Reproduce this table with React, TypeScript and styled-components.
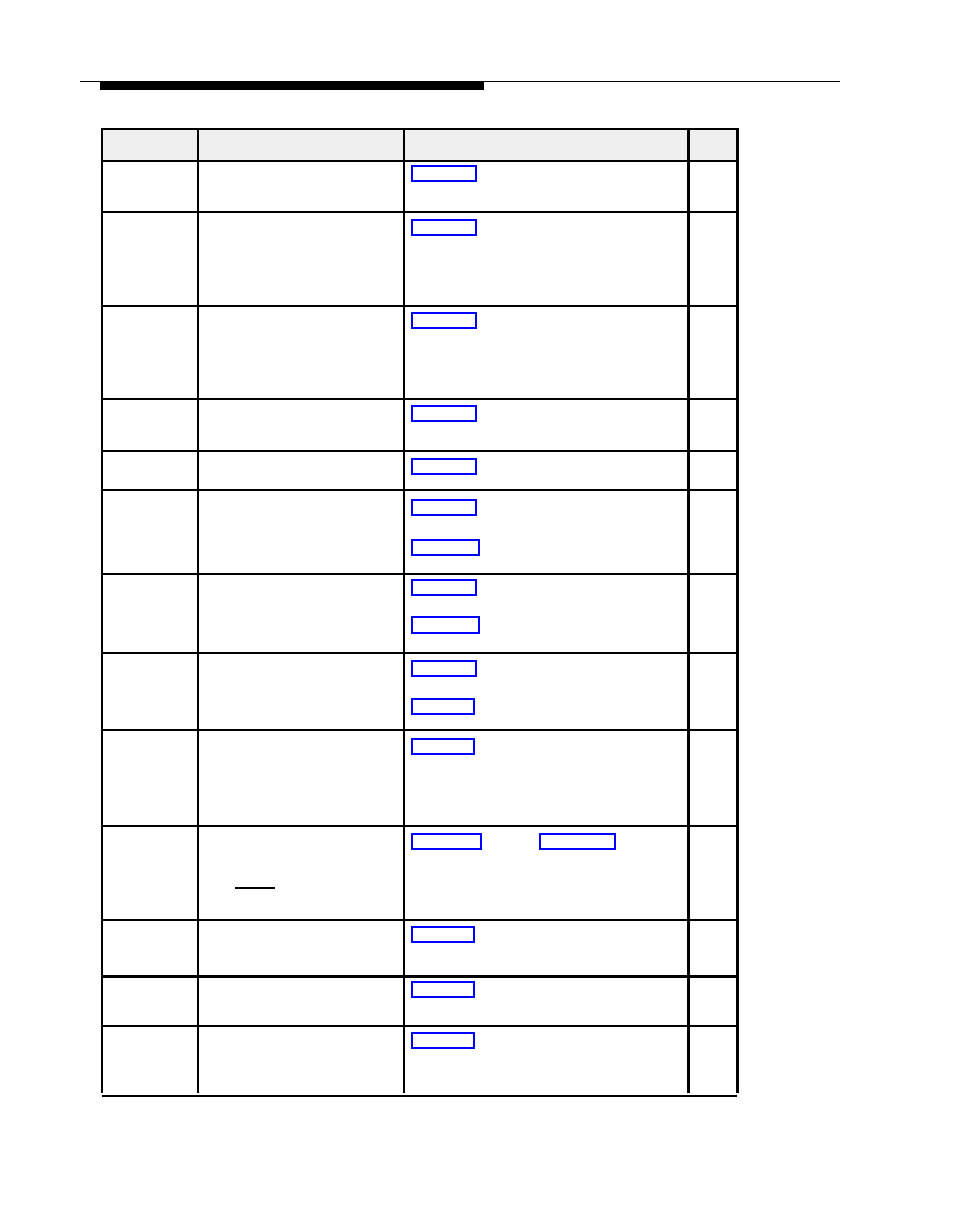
import React from 'react';
import styled, { createGlobalStyle } from 'styled-components';

const GlobalStyle = createGlobalStyle`
  html, body {
    margin: 0;
    padding: 0;
    background: #ffffff;
    font-family: "Liberation Sans", Arial, sans-serif;
  }
`;

interface LinkBox {
  width: number;
  height?: number;
  gap?: number;
}

interface RowData {
  height: number;
  offset: number;
  heavy?: boolean;
  inline?: boolean;
  boxes: LinkBox[];
  underline?: boolean;
}

const rows: RowData[] = [
  { height: 51, offset: 3, boxes: [{ width: 66 }] },
  { height: 94, offset: 6, boxes: [{ width: 66 }] },
  { height: 93, offset: 5, boxes: [{ width: 66 }] },
  { height: 52, offset: 5, boxes: [{ width: 66 }] },
  { height: 39, offset: 6, boxes: [{ width: 66 }] },
  { height: 84, offset: 8, boxes: [{ width: 66 }, { width: 69, gap: 23 }] },
  { height: 79, offset: 4, boxes: [{ width: 66 }, { width: 69, height: 18, gap: 20 }] },
  { height: 77, offset: 6, boxes: [{ width: 66 }, { width: 64, gap: 21 }] },
  { height: 96, offset: 7, boxes: [{ width: 64 }] },
  {
    height: 94,
    offset: 6,
    inline: true,
    underline: true,
    boxes: [{ width: 71 }, { width: 77, gap: 57 }],
  },
  { height: 56, offset: 5, boxes: [{ width: 64 }] },
  { height: 50, offset: 3, heavy: true, boxes: [{ width: 64 }] },
  { height: 68, offset: 5, boxes: [{ width: 64 }] },
];

const Page = styled.div`
  width: 954px;
  min-height: 1228px;
  padding-top: 81px;
  box-sizing: border-box;
`;

const HeadRule = styled.div`
  margin-left: 80px;
  width: 760px;
  height: 1px;
  background: #000;
`;

const HeadBar = styled.div`
  margin-left: 100px;
  width: 384px;
  height: 8px;
  background: #000;
`;

const Table = styled.div`
  margin-top: 38px;
  margin-left: 101px;
  width: 638px;
  border-left: 2px solid #000;
  box-sizing: border-box;
`;

const Row = styled.div<{ $height: number; $heavy?: boolean }>`
  display: grid;
  grid-template-columns: 96px 206px 285px 49px;
  height: ${(p) => p.$height}px;
  border-top: ${(p) => (p.$heavy ? 3 : 2)}px solid #000;
  box-sizing: border-box;
`;

const Cell = styled.div<{ $head?: boolean; $thick?: boolean }>`
  border-right: ${(p) => (p.$thick ? 3 : 2)}px solid #000;
  background: ${(p) => (p.$head ? '#efefef' : 'transparent')};
  box-sizing: border-box;
  min-width: 0;
`;

const LinkCell = styled(Cell)<{ $offset: number; $inline?: boolean }>`
  display: flex;
  flex-direction: ${(p) => (p.$inline ? 'row' : 'column')};
  align-items: flex-start;
  padding: ${(p) => p.$offset}px 0 0 6px;
`;

const Link = styled.a<{ $width: number; $height: number; $gap: number; $inline?: boolean }>`
  display: block;
  width: ${(p) => p.$width}px;
  height: ${(p) => p.$height}px;
  border: 2px solid #0000ff;
  box-sizing: border-box;
  ${(p) => (p.$inline ? `margin-left: ${p.$gap}px;` : `margin-top: ${p.$gap}px;`)}
`;

const TermCell = styled(Cell)`
  padding: 60px 0 0 36px;
`;

const Underline = styled.span`
  display: block;
  width: 40px;
  border-bottom: 2px solid #000;
`;

const BottomRule = styled.div`
  margin-top: 2px;
  margin-left: 102px;
  width: 635px;
  height: 2px;
  background: #000;
`;

const App: React.FC = () => (
  <>
    <GlobalStyle />
    <Page>
      <HeadRule />
      <HeadBar />
      <Table>
        <Row $height={32}>
          <Cell $head />
          <Cell $head />
          <Cell $head $thick />
          <Cell $head $thick />
        </Row>
        {rows.map((row, i) => (
          <Row key={i} $height={row.height} $heavy={row.heavy}>
            <Cell />
            {row.underline ? (
              <TermCell>
                <Underline />
              </TermCell>
            ) : (
              <Cell />
            )}
            <LinkCell $thick $offset={row.offset} $inline={row.inline}>
              {row.boxes.map((box, j) => (
                <Link
                  key={j}
                  $width={box.width}
                  $height={box.height ?? 17}
                  $gap={box.gap ?? 0}
                  $inline={row.inline}
                />
              ))}
            </LinkCell>
            <Cell $thick />
          </Row>
        ))}
      </Table>
      <BottomRule />
    </Page>
  </>
);

export default App;
